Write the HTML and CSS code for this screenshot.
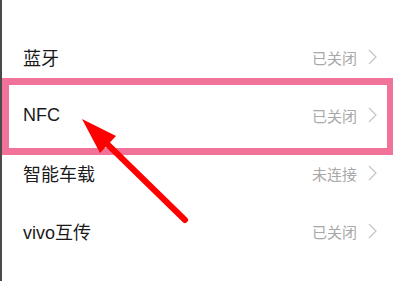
FILE: index.html
```html
<!DOCTYPE html>
<html lang="zh">
<head>
<meta charset="utf-8">
<link rel="stylesheet" href="styles.css">
</head>
<body>
<div class="screen">
  <div class="list">
    <div class="row"><span class="label">蓝牙</span><span class="status">已关闭<svg class="chev" viewBox="0 0 9 16"><path d="M1 1 L8 8 L1 15"/></svg></span></div>
    <div class="row"><span class="label">NFC</span><span class="status">已关闭<svg class="chev" viewBox="0 0 9 16"><path d="M1 1 L8 8 L1 15"/></svg></span></div>
    <div class="row"><span class="label">智能车载</span><span class="status">未连接<svg class="chev" viewBox="0 0 9 16"><path d="M1 1 L8 8 L1 15"/></svg></span></div>
    <div class="row"><span class="label">vivo互传</span><span class="status">已关闭<svg class="chev" viewBox="0 0 9 16"><path d="M1 1 L8 8 L1 15"/></svg></span></div>
    <div class="row"><span class="label">手机投屏</span><span class="status">未连接<svg class="chev" viewBox="0 0 9 16"><path d="M1 1 L8 8 L1 15"/></svg></span></div>
  </div>
  <div class="highlight"></div>
  <svg class="arrow" viewBox="0 0 393 281">
    <line x1="185" y1="220" x2="100" y2="137" stroke="#ff0000" stroke-width="6" stroke-linecap="round"/>
    <polygon points="82,119 116,136 100,153" fill="#ff0000"/>
  </svg>
</div>
</body>
</html>
```
FILE: styles.css
```css
html, body {
  margin: 0;
  padding: 0;
  background: #ffffff;
}
.screen {
  position: relative;
  width: 393px;
  height: 281px;
  overflow: hidden;
  box-sizing: border-box;
  border-left: 2px solid #4a4a4a;
  font-family: "Liberation Sans", "Noto Sans CJK SC", sans-serif;
}
.list {
  padding-top: 28px;
}
.row {
  height: 58px;
  display: flex;
  align-items: center;
  justify-content: space-between;
  padding: 0 16px 0 21px;
}
.label {
  font-size: 18px;
  color: #1a1a1a;
}
.status {
  display: flex;
  align-items: center;
  font-size: 15px;
  color: #a8a8a8;
}
.chev {
  width: 9px;
  height: 16px;
  margin-left: 11px;
  fill: none;
  stroke: #c4c4c4;
  stroke-width: 1.2;
}
.highlight {
  position: absolute;
  left: 0;
  top: 78px;
  width: 392px;
  height: 77px;
  box-sizing: border-box;
  border: 7px solid #f27399;
}
.arrow {
  position: absolute;
  left: -2px;
  top: 0;
  width: 393px;
  height: 281px;
}
```
